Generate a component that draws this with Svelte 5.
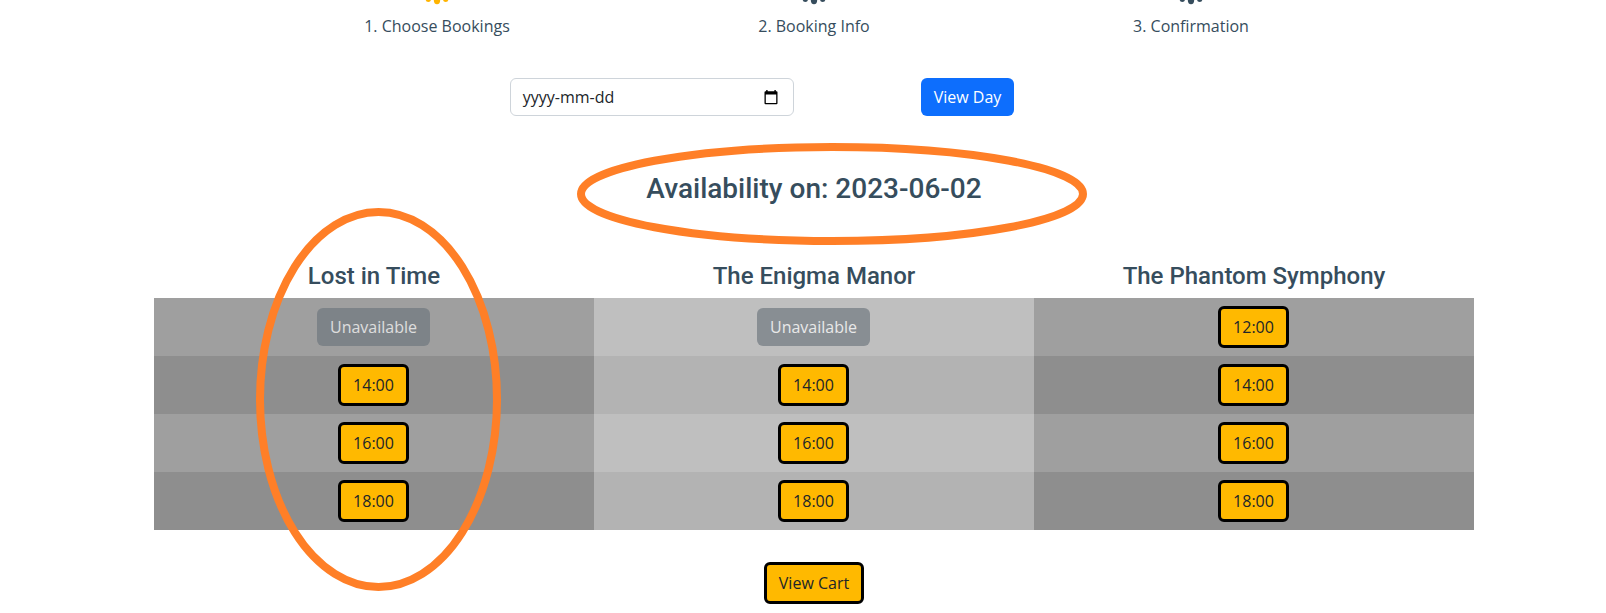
<script>
  const steps = [
    { label: '1. Choose Bookings', active: true },
    { label: '2. Booking Info', active: false },
    { label: '3. Confirmation', active: false },
  ];
  const rooms = [
    { name: 'Lost in Time', slots: [null, '14:00', '16:00', '18:00'] },
    { name: 'The Enigma Manor', slots: [null, '14:00', '16:00', '18:00'] },
    { name: 'The Phantom Symphony', slots: ['12:00', '14:00', '16:00', '18:00'] },
  ];
</script>

<main>
  <ol class="steps">
    {#each steps as step}
      <li>
        <svg class="gear" class:active={step.active} width="32" height="5" viewBox="0 0 32 5" aria-hidden="true">
          <ellipse cx="16" cy="0" rx="3.2" ry="4.2" />
          <circle cx="7.3" cy="-0.8" r="2.7" />
          <circle cx="24.7" cy="-0.8" r="2.7" />
        </svg>
        <span>{step.label}</span>
      </li>
    {/each}
  </ol>

  <form class="picker">
    <div class="date">
      <span>yyyy-mm-dd</span>
      <svg width="14" height="15" viewBox="0 0 14 15" aria-hidden="true">
        <path fill-rule="evenodd" d="M2.2 0h1.4v1.2h6.8V0h1.4v1.2h.7q1 0 1 1v11q0 1-1 1h-11q-1 0-1-1v-11q0-1 1-1h.7zM1.8 4.6v8.3h10.4V4.6z" />
      </svg>
    </div>
    <button type="button" class="btn primary">View Day</button>
  </form>

  <h2>Availability on: 2023-06-02</h2>

  <div class="grid">
    {#each rooms as room}
      <section>
        <h3>{room.name}</h3>
        {#each room.slots as slot}
          <div class="slot">
            {#if slot}
              <button type="button" class="btn gold">{slot}</button>
            {:else}
              <button type="button" class="btn off" disabled>Unavailable</button>
            {/if}
          </div>
        {/each}
      </section>
    {/each}
  </div>

  <button type="button" class="btn gold cart">View Cart</button>

  <svg class="marks" width="1606" height="613" viewBox="0 0 1606 613" aria-hidden="true">
    <ellipse cx="832" cy="194" rx="251" ry="47" />
    <ellipse cx="378.5" cy="399.5" rx="118.5" ry="187.5" />
  </svg>
</main>

<style>
  :global(body) {
    background: #fff;
    overflow: hidden;
  }
  main {
    position: relative;
    box-sizing: border-box;
    width: 1606px;
    height: 613px;
    overflow: hidden;
    padding: 0 132px 0 154px;
    display: flex;
    flex-direction: column;
    align-items: center;
    color: #364d5d;
    font: 400 16px/24px 'Open Sans', sans-serif;
  }
  .steps {
    display: grid;
    grid-template-columns: repeat(3, 1fr);
    width: 1131px;
    margin: 0;
    padding: 0;
    list-style: none;
  }
  .steps li {
    display: flex;
    flex-direction: column;
    align-items: center;
    gap: 9px;
  }
  .gear {
    fill: #364d5d;
  }
  .gear.active {
    fill: #ffb400;
  }
  .picker {
    display: flex;
    align-items: center;
    gap: 127px;
    margin: 40px 104px 0 0;
  }
  .date {
    box-sizing: border-box;
    width: 284px;
    height: 38px;
    padding: 0 15px 0 12px;
    border: 1px solid #ced4da;
    border-radius: 6px;
    display: flex;
    align-items: center;
    justify-content: space-between;
    color: #212529;
  }
  .date svg {
    fill: #000;
  }
  .btn {
    box-sizing: border-box;
    padding: 6px 12px;
    border: 1px solid transparent;
    border-radius: 6px;
    font: 400 16px/24px 'Open Sans', sans-serif;
  }
  .primary {
    background: #0d6efd;
    color: #fff;
  }
  .gold {
    background: #ffb900;
    border: 3px solid #000;
    color: #212529;
  }
  .off {
    background: #6c757d;
    color: #fff;
    opacity: 0.65;
  }
  h2,
  h3 {
    margin: 0;
    font-family: Roboto, sans-serif;
    font-weight: 500;
    text-align: center;
  }
  h2 {
    margin-top: 56px;
    font-size: 28px;
    line-height: 34px;
  }
  .grid {
    display: grid;
    grid-template-columns: repeat(3, 440px);
    margin-top: 56px;
  }
  h3 {
    height: 36px;
    font-size: 24px;
    line-height: 29px;
  }
  .slot {
    box-sizing: border-box;
    height: 58px;
    padding-right: 1px;
    display: flex;
    align-items: center;
    justify-content: center;
    background: #9f9f9f;
  }
  .slot:nth-child(odd) {
    background: #8e8e8e;
  }
  section:nth-child(2) .slot {
    background: #bfbfbf;
  }
  section:nth-child(2) .slot:nth-child(odd) {
    background: #b3b3b3;
  }
  .cart {
    margin-top: 32px;
  }
  .marks {
    position: absolute;
    inset: 0;
    fill: none;
    stroke: #ff7f27;
    stroke-width: 8;
    pointer-events: none;
  }
</style>
